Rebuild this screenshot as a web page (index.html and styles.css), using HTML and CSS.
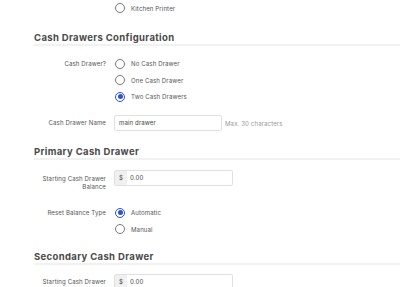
FILE: index.html
```html
<!DOCTYPE html>
<html lang="en">
<head>
<meta charset="UTF-8">
<meta name="viewport" content="width=device-width, initial-scale=1.0">
<title>Cash Drawers</title>
<link rel="stylesheet" href="styles.css">
</head>
<body>
<div class="page">
  <div class="field top-field">
    <div class="field-label"></div>
    <div class="options">
      <label class="option"><span class="radio"></span>Kitchen Printer</label>
    </div>
  </div>

  <h2 class="section-title">Cash Drawers Configuration</h2>
  <div class="field">
    <div class="field-label">Cash Drawer?</div>
    <div class="options">
      <label class="option"><span class="radio"></span>No Cash Drawer</label>
      <label class="option"><span class="radio"></span>One Cash Drawer</label>
      <label class="option"><span class="radio checked"></span>Two Cash Drawers</label>
    </div>
  </div>
  <div class="field name-field">
    <div class="field-label">Cash Drawer Name</div>
    <div class="control-line">
      <div class="text-input">main drawer</div>
      <span class="hint">Max. 30 characters</span>
    </div>
  </div>

  <h2 class="section-title">Primary Cash Drawer</h2>
  <div class="field money-field">
    <div class="field-label">Starting Cash Drawer Balance</div>
    <div class="money-input"><span class="addon">$</span><span class="value">0.00</span></div>
  </div>
  <div class="field reset-field">
    <div class="field-label">Reset Balance Type</div>
    <div class="options">
      <label class="option"><span class="radio checked"></span>Automatic</label>
      <label class="option"><span class="radio"></span>Manual</label>
    </div>
  </div>

  <h2 class="section-title after-options">Secondary Cash Drawer</h2>
  <div class="field money-field last">
    <div class="field-label">Starting Cash Drawer Balance</div>
    <div class="money-input"><span class="addon">$</span><span class="value">0.00</span></div>
  </div>
</div>
</body>
</html>
```

FILE: styles.css
```css
body {
  margin: 0;
  padding: 0;
  font-family: Inter, "Noto Sans", sans-serif;
  background-color: #fff;
  color: #555;
  overflow: hidden;
}
.page {
  padding-left: 34px;
}
.section-title {
  margin: 14px 0 0 0;
  font-size: 9.5px;
  line-height: 13px;
  font-weight: 700;
  color: #4a4a4a;
  letter-spacing: 0.35px;
  border-bottom: 2px solid #f1f1f1;
}
.section-title.after-options {
  margin-top: 12px;
}
.field {
  display: grid;
  grid-template-columns: 72px 1fr;
  column-gap: 8px;
  font-size: 6.1px;
  letter-spacing: 0.1px;
  margin-top: 10px;
}
.top-field {
  margin-top: 0;
}
.field-label {
  text-align: right;
  line-height: 16.5px;
  color: #555;
}
.options {
  display: flex;
  flex-direction: column;
}
.option {
  display: flex;
  align-items: center;
  height: 16.5px;
  color: #555;
}
.radio {
  width: 8px;
  height: 8px;
  border: 1px solid #777;
  border-radius: 50%;
  margin: 0 6px 0 1px;
  box-sizing: content-box;
  display: inline-flex;
  align-items: center;
  justify-content: center;
}
.radio.checked {
  border-color: #2d52d3;
}
.radio.checked::after {
  content: "";
  width: 5px;
  height: 5px;
  border-radius: 50%;
  background-color: #2d52d3;
}
.control-line {
  display: flex;
  align-items: center;
}
.text-input {
  width: 108px;
  height: 16px;
  box-sizing: border-box;
  border: 1px solid #e0e0e0;
  border-radius: 2px;
  padding-left: 4px;
  line-height: 14px;
  color: #444;
}
.hint {
  margin-left: 3px;
  color: #999;
}
.name-field .field-label {
  line-height: 16px;
}
.money-field {
  margin-top: 10px;
}
.money-field.last {
  margin-top: 9px;
}
.money-field .field-label {
  line-height: 8.5px;
  padding-top: 4.5px;
}
.money-input {
  display: flex;
  width: 119px;
  height: 16px;
  box-sizing: border-box;
  border: 1px solid #e0e0e0;
  border-radius: 2px;
  line-height: 14px;
  color: #444;
}
.addon {
  width: 12px;
  background-color: #f0f0f0;
  text-align: center;
}
.value {
  padding-left: 3px;
}
.reset-field {
  margin-top: 13px;
}
```
